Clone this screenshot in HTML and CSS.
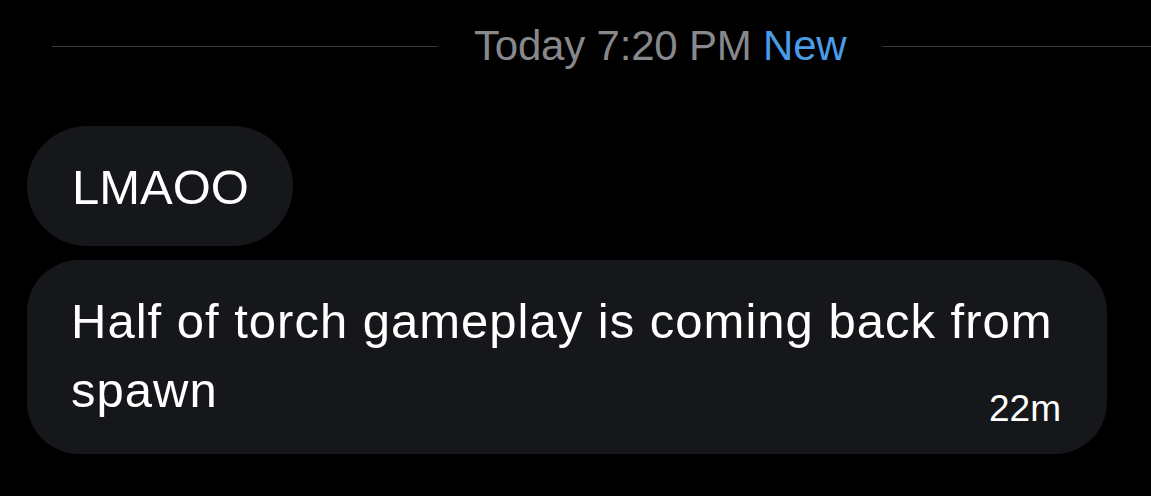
FILE: index.html
```html
<!DOCTYPE html>
<html lang="en">
<head>
    <title>Messages</title>
    <meta charset="utf-8">
    <link rel="stylesheet" href="styles.css">
</head>
<body>

    <!-- dato-skille -->
    <div class="divider">
        <span class="divider-line divider-left"></span>
        <span class="divider-text">Today 7:20 PM <span class="divider-new">New</span></span>
        <span class="divider-line divider-right"></span>
    </div>

    <!-- meldinger -->
    <div class="messages">
        <div class="bubble bubble-short">LMAOO</div>
        <div class="bubble bubble-long">
            <p class="bubble-text">Half of torch gameplay is coming back from spawn</p>
            <span class="bubble-time">22m</span>
        </div>
    </div>

</body>
</html>
```

FILE: styles.css
```css
body{ /* bakgrunn og font */
    margin: 0;
    padding-top: 22px;
    background-color: #000;
    color: #fff;
    font-family: "Liberation Sans", Arial, sans-serif;
}

.divider{ /* linje - tekst - linje */
    display: flex;
    align-items: center;
    padding-left: 52px;
    gap: 36px;
}

.divider-line{
    height: 1px;
    background-color: #38383b;
}

.divider-left{
    width: 386px;
}

.divider-right{
    flex: 1;
}

.divider-text{
    font-size: 42px;
    color: #87888c;
    letter-spacing: -0.2px;
    white-space: nowrap;
}

.divider-new{
    color: #4a9be8;
}

.messages{ /* boblene */
    display: flex;
    flex-direction: column;
    align-items: flex-start;
    gap: 14px;
    margin-top: 56px;
    padding-left: 27px;
}

.bubble{
    background-color: #16171a;
    font-size: 49px;
    line-height: 69px;
}

.bubble-short{
    padding: 27px 44px 24px 45px;
    border-radius: 60px;
}

.bubble-long{
    display: grid;
    width: 990px;
    padding: 27px 46px 29px 44px;
    border-radius: 52px;
}

.bubble-text{
    grid-area: 1 / 1;
    margin: 0;
    letter-spacing: 1px;
}

.bubble-time{
    grid-area: 1 / 1;
    justify-self: end;
    align-self: end;
    font-size: 37px;
    line-height: 1;
    margin-bottom: -2px;
}
```
